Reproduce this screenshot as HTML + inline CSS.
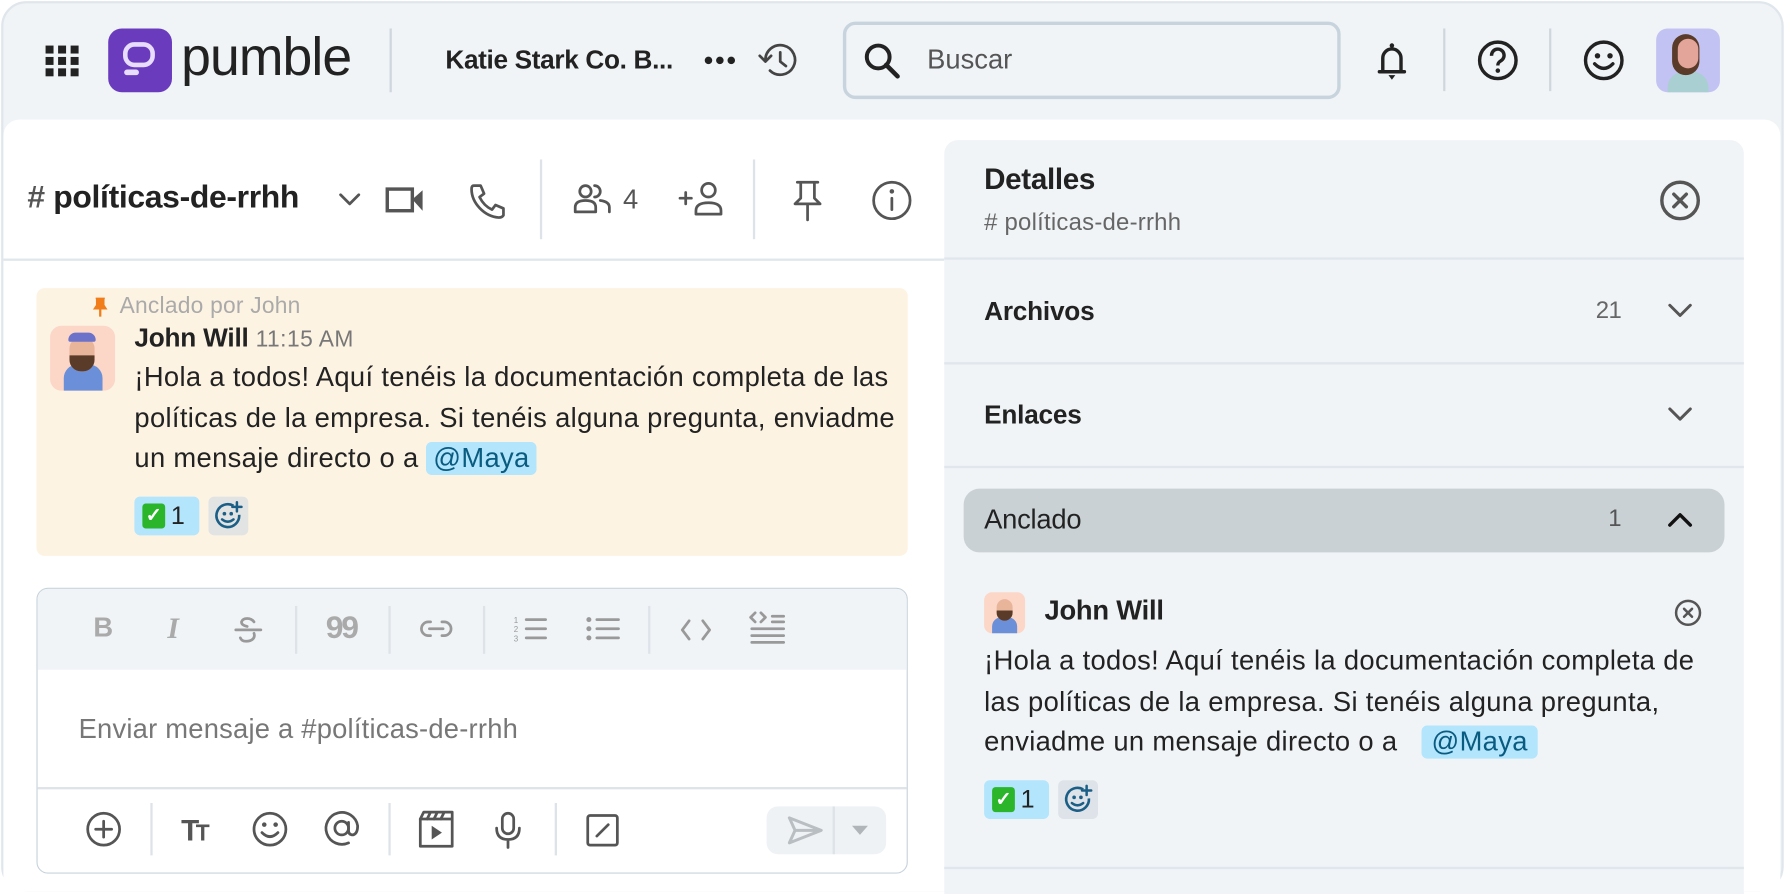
<!DOCTYPE html>
<html><head><meta charset="utf-8"><style>
*{box-sizing:border-box;margin:0;padding:0}
html,body{width:1786px;height:894px;overflow:hidden;background:#fff}
#w{position:absolute;left:0;top:0;width:1568px;height:785px;transform:scale(1.13903);transform-origin:0 0;font-family:"Liberation Sans",sans-serif;color:#222}
.a{position:absolute}
.frame{left:1px;top:1px;width:1565px;height:782px;border:2px solid #dfe6ec;border-radius:22px;background:#f0f4f7;overflow:hidden}
.main{left:3px;top:105px;width:1560px;height:678px;background:#fff;border-radius:14px 14px 0 0}
.t{white-space:nowrap;letter-spacing:-0.5px}
svg{position:absolute;overflow:visible}
.vd{width:2px;background:#dde3e8}
.hl{height:2px;background:#dfe6ec}
.ic{fill:none;stroke:#444;stroke-width:2.4;stroke-linecap:round;stroke-linejoin:round}
.g{fill:none;stroke:#999;stroke-width:2.4;stroke-linecap:round;stroke-linejoin:round}
.g5{fill:none;stroke:#555;stroke-width:2.4;stroke-linecap:round;stroke-linejoin:round}
.msg{font-size:24px;line-height:35.5px;letter-spacing:0.3px;white-space:nowrap;color:#222}
.chip{background:#b3e5fc;border-radius:5px;color:#0a5b80;padding:1px 6px}
</style></head><body><div id="w">
<div class="a frame"></div>
<svg style="left:40px;top:40px" width="30" height="28"><g fill="#222"><rect x="0" y="0" width="7" height="7"/><rect x="11" y="0" width="7" height="7"/><rect x="22" y="0" width="7" height="7"/><rect x="0" y="10" width="7" height="7"/><rect x="11" y="10" width="7" height="7"/><rect x="22" y="10" width="7" height="7"/><rect x="0" y="20" width="7" height="7"/><rect x="11" y="20" width="7" height="7"/><rect x="22" y="20" width="7" height="7"/></g></svg>
<div class="a" style="left:95px;top:25px;width:56px;height:56px;background:#6a3cbd;border-radius:12px"></div>
<svg style="left:95px;top:25px" width="56" height="56"><rect x="15" y="14" width="24" height="18" rx="8" fill="none" stroke="#e8dcff" stroke-width="4"/><rect x="14" y="36" width="13" height="5" rx="2.5" fill="#e8dcff"/></svg>
<div class="a t" style="left:159px;top:22px;font-size:47px;font-weight:500;letter-spacing:-0.8px;color:#222">pumble</div>
<div class="a vd" style="left:342px;top:25px;height:56px;background:#cfd7de"></div>
<div class="a t" style="left:391px;top:39px;font-size:23px;font-weight:600;letter-spacing:-0.3px">Katie Stark Co. B...</div>
<svg style="left:618px;top:48px" width="30" height="10"><circle cx="4" cy="5" r="3.3" fill="#222"/><circle cx="14" cy="5" r="3.3" fill="#222"/><circle cx="24" cy="5" r="3.3" fill="#222"/></svg>
<svg style="left:666px;top:35px" width="36" height="36"><path d="M6 18A13 13 0 1 1 10 27" class="ic" stroke="#222" stroke-width="3"/><path d="M1 14l5 5 5-5" class="ic" stroke="#222" stroke-width="3"/><path d="M19 11v8l5 4" class="ic" stroke="#222" stroke-width="3"/></svg>
<div class="a" style="left:740px;top:19px;width:437px;height:68px;border:3px solid #c8d4dd;border-radius:11px"></div>
<svg style="left:758px;top:37px" width="34" height="34"><circle cx="13" cy="13" r="10" fill="none" stroke="#222" stroke-width="3.5"/><path d="M20 20l10 10" stroke="#222" stroke-width="4" stroke-linecap="round"/></svg>
<div class="a t" style="left:814px;top:39px;font-size:24px;color:#555;letter-spacing:0">Buscar</div>
<svg style="left:1206px;top:35px" width="32" height="38"><path d="M8 28V16a8 8 0 0 1 16 0v12h3H5z" fill="none" stroke="#222" stroke-width="3" stroke-linejoin="round"/><circle cx="16" cy="5" r="2" fill="#222"/><path d="M13 31h6l-3 4z" fill="#222"/></svg>
<div class="a vd" style="left:1267px;top:25px;height:55px;background:#cfd7de"></div>
<svg style="left:1297px;top:35px" width="36" height="36"><circle cx="18" cy="18" r="16" fill="none" stroke="#222" stroke-width="3"/><path d="M12.5 14a5.5 5.5 0 1 1 8 4.5c-2 1.2-2.5 2.2-2.5 4" fill="none" stroke="#222" stroke-width="3"/><circle cx="18" cy="27" r="2" fill="#222"/></svg>
<div class="a vd" style="left:1360px;top:25px;height:55px;background:#cfd7de"></div>
<svg style="left:1390px;top:35px" width="36" height="36"><circle cx="18" cy="18" r="16" fill="none" stroke="#222" stroke-width="3"/><circle cx="12.5" cy="14" r="2.4" fill="#222"/><circle cx="23.5" cy="14" r="2.4" fill="#222"/><path d="M10 21q8 8 16 0" fill="none" stroke="#222" stroke-width="3" stroke-linecap="round"/></svg>
<div class="a" style="left:1454px;top:25px;width:56px;height:56px;background:#c2c3f2;border-radius:10px;overflow:hidden">
<div class="a" style="left:10px;top:38px;width:36px;height:24px;background:#a9cfd3;border-radius:14px 14px 0 0"></div>
<div class="a" style="left:14px;top:5px;width:24px;height:36px;background:#5a3a28;border-radius:12px"></div>
<div class="a" style="left:19px;top:9px;width:18px;height:26px;background:#e3a599;border-radius:9px"></div></div>
<div class="a main"></div>
<div class="a t" style="left:24px;top:157px;font-size:28px;font-weight:600;letter-spacing:-0.3px"><span style="color:#555">#</span> políticas-de-rrhh</div>
<svg style="left:297px;top:168px" width="20" height="14"><path d="M2 3l8 8 8-8" class="g5"/></svg>
<svg style="left:338px;top:163px" width="36" height="26"><rect x="2" y="3" width="22" height="19" fill="none" stroke="#555" stroke-width="3"/><path d="M24 12l9-8v18z" fill="#555"/></svg>
<svg style="left:411px;top:160px" width="36" height="34"><path d="M5 3l6 0 3 7-4 3q4 8 11 11l3-4 7 3v6q-1 2-4 2C14 30 3 18 3 6q0-3 2-3z" class="g5"/></svg>
<div class="a vd" style="left:474px;top:140px;height:70px"></div>
<svg style="left:503px;top:160px" width="36" height="30"><circle cx="11" cy="8" r="5" class="g5"/><path d="M2 26v-4q0-6 9-6t9 6v4z" class="g5"/><path d="M19 3a5 5 0 0 1 0 10M24 16q8 1 8 6v4" class="g5"/></svg>
<div class="a t" style="left:547px;top:162px;font-size:24px;color:#555">4</div>
<svg style="left:596px;top:158px" width="42" height="34"><path d="M1 16h10M6 11v10" class="g5" stroke-width="3"/><circle cx="26" cy="9" r="6" class="g5"/><path d="M15 30v-3q0-7 11-7t11 7v3z" class="g5"/></svg>
<div class="a vd" style="left:661px;top:140px;height:70px"></div>
<svg style="left:695px;top:158px" width="28" height="38"><path d="M5 2h18M8 2v14l-5 5h22l-5-5V2M14 21v14" class="g5"/></svg>
<svg style="left:765px;top:158px" width="36" height="36"><circle cx="18" cy="18" r="16" class="g5"/><path d="M18 16v10" class="g5" stroke-width="3"/><circle cx="18" cy="10" r="2" fill="#555"/></svg>
<div class="a hl" style="left:3px;top:227px;width:826px"></div>
<div class="a" style="left:32px;top:253px;width:765px;height:235px;background:#fdf3e3;border-radius:7px"></div>
<svg style="left:81px;top:261px" width="14" height="18"><path d="M3 1h8M4 1v6l-2 3h10l-2-3V1z" fill="#f07d1a" stroke="#f07d1a" stroke-width="1.5"/><path d="M7 10v7" stroke="#f07d1a" stroke-width="2"/></svg>
<div class="a t" style="left:105px;top:258px;font-size:20px;color:#aaa;letter-spacing:0.2px">Anclado por John</div>
<div class="a" style="left:44px;top:286px;width:57px;height:57px;background:#fcd6c6;border-radius:10px;overflow:hidden">
<div class="a" style="left:12px;top:34px;width:34px;height:26px;background:#6b8fd8;border-radius:12px 12px 0 0"></div>
<div class="a" style="left:17px;top:10px;width:22px;height:30px;background:#e8b59a;border-radius:10px"></div>
<div class="a" style="left:17px;top:26px;width:22px;height:14px;background:#5a3b2a;border-radius:0 0 10px 10px"></div>
<div class="a" style="left:16px;top:6px;width:24px;height:8px;background:#6c71c9;border-radius:8px 8px 2px 2px"></div></div>
<div class="a t" style="left:118px;top:283px;font-size:23px;font-weight:700;letter-spacing:-0.2px">John Will <span style="font-size:20px;font-weight:400;color:#777;letter-spacing:0.4px">11:15 AM</span></div>
<div class="a msg" style="left:118px;top:314px">¡Hola a todos! Aquí tenéis la documentación completa de las<br>políticas de la empresa. Si tenéis alguna pregunta, enviadme<br>un mensaje directo o a <span class="chip">@Maya</span></div>
<div class="a" style="left:118px;top:436px;width:57px;height:34px;background:#b3e5fc;border-radius:5px"></div>
<div class="a" style="left:125px;top:442px;width:20px;height:22px;background:#2ab52a;border-radius:3px;color:#fff;font-size:17px;font-weight:700;text-align:center;line-height:22px">✓</div>
<div class="a t" style="left:150px;top:440px;font-size:22px">1</div>
<div class="a" style="left:183px;top:436px;width:35px;height:34px;background:#e2e4e4;border-radius:5px"></div>
<svg style="left:188px;top:440px" width="26" height="26"><path d="M17 4A10 10 0 1 0 22 12" fill="none" stroke="#1c5f86" stroke-width="2.3"/><circle cx="9" cy="11" r="1.6" fill="#1c5f86"/><circle cx="15" cy="11" r="1.6" fill="#1c5f86"/><path d="M7 16q5 4 10 0M20 1v8M16 5h8" fill="none" stroke="#1c5f86" stroke-width="2.2" stroke-linecap="round"/></svg>
<div class="a" style="left:32px;top:516px;width:765px;height:251px;border:1.5px solid #c7d3dc;border-radius:10px;overflow:hidden;background:#fff">
<div class="a" style="left:0;top:0;width:765px;height:71px;background:#f0f4f7"></div>
<div class="a" style="left:0;top:174px;width:765px;height:1.5px;background:#dde3e8"></div></div>
<div class="a t" style="left:82px;top:538px;font-size:24px;font-weight:700;color:#aaa">B</div>
<div class="a t" style="left:147px;top:537px;font-size:26px;font-weight:700;font-style:italic;font-family:'Liberation Serif',serif;color:#aaa">I</div>
<svg style="left:205px;top:540px" width="26" height="26"><path d="M18 6q-2-3-6-3t-5 3q0 3 5 4M2 13h22M18 16q1 3-1 5t-6 2-5-3" class="g"/></svg>
<div class="a vd" style="left:259px;top:532px;height:42px"></div>
<div class="a t" style="left:286px;top:535px;font-size:28px;font-weight:700;color:#aaa;letter-spacing:-2px">99</div>
<div class="a vd" style="left:341px;top:532px;height:42px"></div>
<svg style="left:368px;top:543px" width="30" height="18"><path d="M10 3H8a6 6 0 0 0 0 12h2M20 3h2a6 6 0 0 1 0 12h-2M9 9h12" class="g" stroke-width="2.8"/></svg>
<div class="a vd" style="left:424px;top:532px;height:42px"></div>
<svg style="left:450px;top:539px" width="32" height="28"><path d="M12 5h17M12 13h17M12 21h17" class="g" stroke-width="3"/><text x="1" y="8" font-size="7" fill="#999" font-family="Liberation Sans">1</text><text x="1" y="16" font-size="7" fill="#999" font-family="Liberation Sans">2</text><text x="1" y="24" font-size="7" fill="#999" font-family="Liberation Sans">3</text></svg>
<svg style="left:514px;top:539px" width="32" height="28"><circle cx="3" cy="5" r="2.2" fill="#999"/><circle cx="3" cy="13" r="2.2" fill="#999"/><circle cx="3" cy="21" r="2.2" fill="#999"/><path d="M10 5h19M10 13h19M10 21h19" class="g" stroke-width="3"/></svg>
<div class="a vd" style="left:569px;top:532px;height:42px"></div>
<svg style="left:596px;top:542px" width="30" height="22"><path d="M9 3l-6 8 6 8M21 3l6 8-6 8" class="g" stroke-width="2"/></svg>
<svg style="left:658px;top:537px" width="32" height="32"><path d="M5 1l-4 4 4 4M10 1l4 4-4 4M20 4h10M20 9h10M2 15h28M2 21h28M2 27h28" class="g" stroke-width="2.3"/></svg>
<div class="a t" style="left:69px;top:627px;font-size:24px;color:#777;letter-spacing:0.2px">Enviar mensaje a #políticas-de-rrhh</div>
<svg style="left:75px;top:712px" width="32" height="32"><circle cx="16" cy="16" r="14" class="g5"/><path d="M16 9v14M9 16h14" class="g5"/></svg>
<div class="a vd" style="left:132px;top:705px;height:46px"></div>
<div class="a t" style="left:159px;top:714px;font-size:26px;font-weight:700;color:#555;letter-spacing:-3px">T<span style="font-size:20px">T</span></div>
<svg style="left:221px;top:712px" width="32" height="32"><circle cx="16" cy="16" r="14" class="g5"/><circle cx="11" cy="12" r="2" fill="#555"/><circle cx="21" cy="12" r="2" fill="#555"/><path d="M9 19q7 7 14 0" class="g5"/></svg>
<svg style="left:284px;top:711px" width="32" height="34"><circle cx="16" cy="16" r="6" class="g5" stroke-width="3"/><path d="M22 11v7q0 4 4 4 4-1 4-8A14 14 0 1 0 22 29" class="g5" stroke-width="3"/></svg>
<div class="a vd" style="left:341px;top:705px;height:46px"></div>
<svg style="left:367px;top:711px" width="32" height="34"><rect x="2" y="8" width="28" height="24" class="g5"/><path d="M2 8l3-6h25v6M11 2l-3 6M17 2l-3 6M23 2l-3 6" class="g5" stroke-width="2"/><path d="M12 14v12l9-6z" fill="#555"/></svg>
<svg style="left:434px;top:712px" width="24" height="34"><rect x="7" y="2" width="10" height="18" rx="5" class="g5"/><path d="M2 15q0 10 10 10t10-10M12 25v7" class="g5"/></svg>
<div class="a vd" style="left:487px;top:705px;height:46px"></div>
<svg style="left:514px;top:714px" width="30" height="30"><rect x="2" y="2" width="26" height="26" rx="2" class="g5" stroke-width="2.6"/><path d="M10 20l10-10" class="g5"/></svg>
<div class="a" style="left:673px;top:708px;width:105px;height:42px;background:#eef2f5;border-radius:10px"></div>
<div class="a vd" style="left:731px;top:708px;height:42px"></div>
<svg style="left:690px;top:715px" width="34" height="28"><path d="M3 3l28 11L3 25l5-11z M8 14h23" fill="none" stroke="#b9bec2" stroke-width="2.6" stroke-linejoin="round"/></svg>
<svg style="left:747px;top:724px" width="16" height="10"><path d="M1 1h14l-7 8z" fill="#b0b5b9"/></svg>
<div class="a" style="left:829px;top:123px;width:702px;height:662px;background:#f0f4f7;border-radius:12px 12px 0 0"></div>
<div class="a t" style="left:864px;top:142px;font-size:26px;font-weight:700;letter-spacing:-0.3px">Detalles</div>
<div class="a t" style="left:864px;top:184px;font-size:21px;color:#666;letter-spacing:0.2px">#&nbsp;políticas-de-rrhh</div>
<svg style="left:1457px;top:158px" width="36" height="36"><circle cx="18" cy="18" r="16" fill="none" stroke="#555" stroke-width="3"/><path d="M12.5 12.5l11 11M23.5 12.5l-11 11" stroke="#555" stroke-width="3" stroke-linecap="round"/></svg>
<div class="a hl" style="left:829px;top:226px;width:702px"></div>
<div class="a t" style="left:864px;top:260px;font-size:23px;font-weight:700;letter-spacing:-0.2px">Archivos</div>
<div class="a t" style="left:1401px;top:261px;font-size:21px;color:#666">21</div>
<svg style="left:1464px;top:266px" width="22" height="14"><path d="M2 2l9 9 9-9" fill="none" stroke="#555" stroke-width="2.6" stroke-linecap="round" stroke-linejoin="round"/></svg>
<div class="a hl" style="left:829px;top:318px;width:702px"></div>
<div class="a t" style="left:864px;top:351px;font-size:23px;font-weight:700;letter-spacing:-0.2px">Enlaces</div>
<svg style="left:1464px;top:357px" width="22" height="14"><path d="M2 2l9 9 9-9" fill="none" stroke="#555" stroke-width="2.6" stroke-linecap="round" stroke-linejoin="round"/></svg>
<div class="a hl" style="left:829px;top:409px;width:702px"></div>
<div class="a" style="left:846px;top:429px;width:668px;height:56px;background:#c9d1d4;border-radius:14px"></div>
<div class="a t" style="left:864px;top:443px;font-size:24px;font-weight:500;letter-spacing:-0.2px">Anclado</div>
<div class="a t" style="left:1412px;top:444px;font-size:21px;color:#555">1</div>
<svg style="left:1464px;top:449px" width="22" height="14"><path d="M2 12l9-9 9 9" fill="none" stroke="#111" stroke-width="3" stroke-linecap="round" stroke-linejoin="round"/></svg>
<div class="a" style="left:864px;top:520px;width:36px;height:36px;background:#fcd6c6;border-radius:7px;overflow:hidden">
<div class="a" style="left:7px;top:22px;width:22px;height:16px;background:#6b8fd8;border-radius:8px 8px 0 0"></div>
<div class="a" style="left:11px;top:6px;width:14px;height:19px;background:#e8b59a;border-radius:7px"></div>
<div class="a" style="left:11px;top:16px;width:14px;height:9px;background:#5a3b2a;border-radius:0 0 7px 7px"></div></div>
<div class="a t" style="left:917px;top:523px;font-size:24px;font-weight:700;letter-spacing:-0.2px">John Will</div>
<svg style="left:1470px;top:526px" width="24" height="24"><circle cx="12" cy="12" r="10.5" fill="none" stroke="#555" stroke-width="2.2"/><path d="M8.5 8.5l7 7M15.5 8.5l-7 7" stroke="#555" stroke-width="2.2" stroke-linecap="round"/></svg>
<div class="a msg" style="left:864px;top:563px">¡Hola a todos! Aquí tenéis la documentación completa de<br>las políticas de la empresa. Si tenéis alguna pregunta,<br>enviadme un mensaje directo o a &nbsp; <span class="chip" style="padding:1px 9px">@Maya</span></div>
<div class="a" style="left:864px;top:685px;width:57px;height:34px;background:#b3e5fc;border-radius:5px"></div>
<div class="a" style="left:871px;top:691px;width:20px;height:22px;background:#2ab52a;border-radius:3px;color:#fff;font-size:17px;font-weight:700;text-align:center;line-height:22px">✓</div>
<div class="a t" style="left:896px;top:689px;font-size:22px">1</div>
<div class="a" style="left:929px;top:685px;width:35px;height:34px;background:#dde3e8;border-radius:5px"></div>
<svg style="left:934px;top:689px" width="26" height="26"><path d="M17 4A10 10 0 1 0 22 12" fill="none" stroke="#1c5f86" stroke-width="2.3"/><circle cx="9" cy="11" r="1.6" fill="#1c5f86"/><circle cx="15" cy="11" r="1.6" fill="#1c5f86"/><path d="M7 16q5 4 10 0M20 1v8M16 5h8" fill="none" stroke="#1c5f86" stroke-width="2.2" stroke-linecap="round"/></svg>
<div class="a hl" style="left:829px;top:761px;width:702px"></div>
</div></body></html>
